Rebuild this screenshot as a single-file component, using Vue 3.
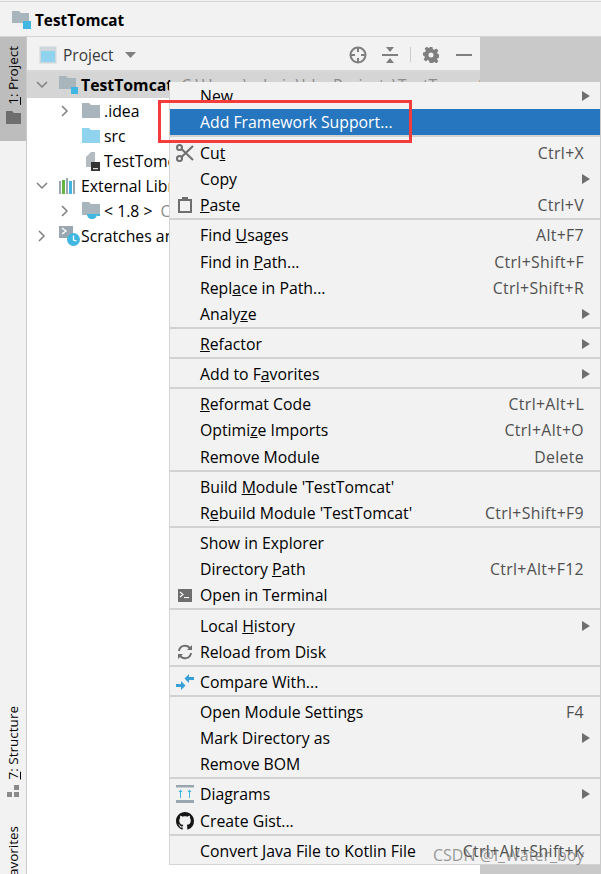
<script setup>
const tree = [
  { id: 'root', indent: 32, arrow: 'down', icon: 'module', label: 'TestTomcat', bold: true, hint: 'C:\\Users\\admin\\IdeaProjects\\TestTomcat', selected: true },
  { id: 'idea', indent: 55, arrow: 'right', icon: 'folder', label: '.idea' },
  { id: 'src', indent: 55, arrow: '', icon: 'src', label: 'src' },
  { id: 'iml', indent: 55, arrow: '', icon: 'iml', label: 'TestTomcat.iml' },
  { id: 'ext', indent: 32, arrow: 'down', icon: 'lib', label: 'External Libraries' },
  { id: 'jdk', indent: 55, arrow: 'right', icon: 'jdk', label: '< 1.8 >', hint: 'C:\\Program Files\\Java' },
  { id: 'scr', indent: 32, arrow: 'right', icon: 'scratch', label: 'Scratches and Consoles' },
]

const groups = [
  [{ t: 'New', sub: 1 }, { t: 'Add Framework Support...', active: 1 }],
  [{ t: 'Cu&t', key: 'Ctrl+X', icon: 'cut' }, { t: 'Copy', sub: 1 }, { t: '&Paste', key: 'Ctrl+V', icon: 'paste' }],
  [{ t: 'Find &Usages', key: 'Alt+F7' }, { t: 'Find in &Path...', key: 'Ctrl+Shift+F' }, { t: 'Repl&ace in Path...', key: 'Ctrl+Shift+R' }, { t: 'Analy&ze', sub: 1 }],
  [{ t: '&Refactor', sub: 1 }],
  [{ t: 'Add to F&avorites', sub: 1 }],
  [{ t: '&Reformat Code', key: 'Ctrl+Alt+L' }, { t: 'Optimi&ze Imports', key: 'Ctrl+Alt+O' }, { t: 'Remove Module', key: 'Delete' }],
  [{ t: 'Build &Module \'TestTomcat\'' }, { t: 'R&ebuild Module \'TestTomcat\'', key: 'Ctrl+Shift+F9' }],
  [{ t: 'Show in Explorer' }, { t: 'Directory &Path', key: 'Ctrl+Alt+F12' }, { t: 'Open in Terminal', icon: 'term' }],
  [{ t: 'Local &History', sub: 1 }, { t: 'Reload from Disk', icon: 'reload' }],
  [{ t: 'Compare With...', icon: 'compare' }],
  [{ t: 'Open Module Settings', key: 'F4' }, { t: 'Mark Directory as', sub: 1 }, { t: 'Remove BOM' }],
  [{ t: 'Diagrams', sub: 1, icon: 'diagram' }, { t: 'Create Gist...', icon: 'github' }],
  [{ t: 'Convert Java File to Kotlin File', key: 'Ctrl+Alt+Shift+K' }],
]

function parts(t) {
  const i = t.indexOf('&')
  if (i < 0) return { a: t, u: '', b: '' }
  return { a: t.slice(0, i), u: t[i + 1], b: t.slice(i + 2) }
}
</script>

<template>
  <div class="app">
    <header class="title">
      <svg class="ic" width="20" height="20" viewBox="0 0 20 20"><path d="M0 1h7l2 2h8v10H0z" fill="#a9b5bd"/><rect x="11" y="11" width="8" height="8" fill="#40b6e0"/></svg>
      <b>TestTomcat</b>
    </header>
    <div class="main">
      <aside class="rail">
        <div class="tab active">
          <span class="vtext"><u>1</u>: Project</span>
          <svg width="15" height="13" viewBox="0 0 15 13"><path d="M0 0h6l2 2h7v11H0z" fill="#6e6e6e"/></svg>
        </div>
        <div class="rail-gap"></div>
        <div class="tab low">
          <span class="vtext"><u>7</u>: Structure</span>
          <svg width="13" height="13" viewBox="0 0 13 13"><g fill="#8a8a8a"><rect x="7" y="0" width="5" height="5"/><rect x="0" y="7" width="5" height="5"/><rect x="7" y="7" width="5" height="5"/></g></svg>
        </div>
        <div class="tab fav"><span class="vtext">2: Favorites</span></div>
      </aside>

      <section class="panel">
        <div class="panel-head">
          <svg width="18" height="18" viewBox="0 0 18 18"><rect x="0.500" y="0.500" width="17" height="17" fill="#cfd6db"/><rect x="2" y="5" width="14" height="11" fill="#8fd3ef"/></svg>
          <span class="panel-name">Project</span>
          <svg width="11" height="6" viewBox="0 0 11 6"><path d="M0 0h11L5.500 6z" fill="#7f7f7f"/></svg>
          <div class="tools">
            <svg width="18" height="18" viewBox="0 0 18 18" fill="none" stroke="#7f7f7f" stroke-width="2"><circle cx="9" cy="9" r="7.500"/><path d="M9 1v5M9 12v5M1 9h5M12 9h5"/></svg>
            <svg class="t2" width="16" height="18" viewBox="0 0 16 18"><g fill="#7f7f7f"><rect x="0" y="8" width="16" height="2"/><path d="M4 1h8L8 6zM4 17h8l-4-5z"/></g></svg>
            <i class="tool-sep"></i>
            <svg width="16" height="16" viewBox="0 0 16 16"><path fill="#7f7f7f" fill-rule="evenodd" d="M6.500 0h3l.4 2.200 1.500.6L13.300 1.500l2.100 2.100-1.300 1.900.6 1.500 2.300.5v3l-2.300.4-.6 1.500 1.300 1.900-2.100 2.100-1.900-1.300-1.500.6L9.500 16h-3l-.4-2.300-1.500-.6-1.900 1.300L.6 12.300l1.300-1.900-.6-1.500L-.000 8.500v-3l2.300-.4.6-1.500L1.600 1.700 3.700-.4l1.900 1.300 1.500-.6zM8 5.500a2.500 2.500 0 1 0 0 5 2.500 2.500 0 0 0 0-5z"/></svg>
            <i class="minus"></i>
          </div>
        </div>
        <div class="tree">
          <div v-for="n in tree" :key="n.id" class="node" :class="{ sel: n.selected }" :style="{ paddingLeft: n.indent + 'px' }">
            <span class="arrow">
              <svg v-if="n.arrow === 'down'" width="12" height="8" viewBox="0 0 12 8" fill="none" stroke="#7f7f7f" stroke-width="1.500"><path d="M1 1l5 5 5-5"/></svg>
              <svg v-else-if="n.arrow === 'right'" width="8" height="12" viewBox="0 0 8 12" fill="none" stroke="#7f7f7f" stroke-width="1.500"><path d="M1 1l5 5-5 5"/></svg>
            </span>
            <span class="node-ic">
              <svg v-if="n.icon === 'module'" width="20" height="20" viewBox="0 0 20 20"><path d="M0 1h7l2 2h8v11H0z" fill="#a9b5bd"/><rect x="12" y="12" width="7" height="7" fill="#40b6e0"/></svg>
              <svg v-else-if="n.icon === 'folder'" width="18" height="15" viewBox="0 0 18 15"><path d="M0 0h7l2 2h9v13H0z" fill="#a9b5bd"/></svg>
              <svg v-else-if="n.icon === 'src'" width="18" height="15" viewBox="0 0 18 15"><path d="M0 0h7l2 2h9v13H0z" fill="#8fd3ef"/></svg>
              <svg v-else-if="n.icon === 'iml'" width="20" height="20" viewBox="0 0 20 20"><path d="M4 6l5-5h4v15H4z" fill="#b5bcc1"/><rect x="9" y="11" width="9" height="9" fill="#333"/><rect x="11" y="17" width="5" height="1.200" fill="#ddd"/></svg>
              <svg v-else-if="n.icon === 'lib'" width="18" height="16" viewBox="0 0 18 16"><rect x="0" y="3" width="2" height="13" fill="#9aa7b0"/><rect x="3" y="2" width="3" height="14" fill="#62b543"/><rect x="7" y="0" width="2" height="16" fill="#9aa7b0"/><rect x="10" y="3" width="3" height="13" fill="#40b6e0"/><rect x="14" y="2" width="2" height="14" fill="#9aa7b0"/></svg>
              <svg v-else-if="n.icon === 'jdk'" width="20" height="18" viewBox="0 0 20 18"><path d="M0 0h7l2 2h9v11H0z" fill="#a9b5bd"/><path d="M5 12h10c0 3-2 5-5 5s-5-2-5-5z" fill="#40b6e0"/><path d="M15 12h3v2h-3z" fill="#40b6e0"/></svg>
              <svg v-else-if="n.icon === 'scratch'" width="22" height="22" viewBox="0 0 22 22"><rect x="0" y="1" width="14" height="12" fill="#9aa7b0"/><path d="M3 3l4 3-4 3" fill="none" stroke="#fff" stroke-width="1.300"/><circle cx="14.500" cy="14.500" r="6.500" fill="#40b6e0"/><path d="M14.500 10.500v4.500l3 1" fill="none" stroke="#fff" stroke-width="1.300"/></svg>
            </span>
            <span class="node-label" :class="{ bold: n.bold }">{{ n.label }}</span>
            <span v-if="n.hint" class="hint">{{ n.hint }}</span>
          </div>
        </div>
      </section>
      <div class="editor"></div>
    </div>

    <nav class="menu">
      <div v-for="(g, gi) in groups" :key="gi" class="group">
        <div v-for="(it, ii) in g" :key="ii" class="item" :class="{ active: it.active }">
          <span class="mic">
            <svg v-if="it.icon === 'cut'" width="18" height="18" viewBox="0 0 18 18" fill="none" stroke="#6e6e6e" stroke-width="2"><circle cx="3.500" cy="3.500" r="2.500"/><circle cx="3.500" cy="14.500" r="2.500"/><path d="M5.500 5L17 16M5.500 13L17 2"/></svg>
            <svg v-else-if="it.icon === 'paste'" width="14" height="16" viewBox="0 0 14 16" fill="none" stroke="#6e6e6e" stroke-width="2"><rect x="1" y="3" width="12" height="12"/><rect x="4" y="0" width="6" height="4" fill="#6e6e6e" stroke="none"/></svg>
            <svg v-else-if="it.icon === 'term'" width="14" height="13" viewBox="0 0 14 13"><rect width="14" height="13" fill="#6e6e6e"/><path d="M2 3l3 2.500-3 2.500" fill="none" stroke="#fff" stroke-width="1.100"/><rect x="6" y="8" width="5" height="1.100" fill="#fff"/></svg>
            <svg v-else-if="it.icon === 'reload'" width="16" height="16" viewBox="0 0 16 16" fill="none" stroke="#6e6e6e" stroke-width="2"><path d="M2 7a6 6 0 0 1 11-2.500M14 9a6 6 0 0 1-11 2.500"/><path d="M15 1v5h-5zM1 15v-5h5z" fill="#6e6e6e" stroke="none"/></svg>
            <svg v-else-if="it.icon === 'compare'" width="18" height="18" viewBox="0 0 18 18"><g fill="#389fd6"><path d="M0 11h5V8l4.500 4.500L5 17v-3H0z"/><path d="M18 4h-5V1L8.500 5.500 13 10V7h5z"/></g></svg>
            <svg v-else-if="it.icon === 'diagram'" width="18" height="18" viewBox="0 0 18 18"><rect width="18" height="2.500" fill="#9aa7b0"/><rect y="15" width="18" height="3" fill="#9aa7b0"/><g fill="#40b6e0"><rect x="4" y="6" width="1" height="7"/><rect x="13" y="6" width="1" height="7"/><path d="M2.500 7l2-2.500 2 2.500zM11.500 7l2-2.500 2 2.500z"/></g></svg>
            <svg v-else-if="it.icon === 'github'" width="18" height="18" viewBox="0 0 16 16"><path fill="#161614" d="M8 0C3.580 0 0 3.580 0 8c0 3.540 2.290 6.530 5.470 7.590.4.070.55-.170.55-.380 0-.190-.010-.820-.010-1.490-2.010.370-2.530-.490-2.690-.940-.090-.230-.480-.940-.820-1.130-.280-.150-.680-.520-.010-.530.630-.010 1.080.580 1.230.820.720 1.210 1.870.870 2.330.660.070-.520.280-.870.510-1.070-1.780-.200-3.640-.890-3.640-3.950 0-.870.310-1.590.820-2.150-.080-.200-.360-1.020.080-2.120 0 0 .670-.210 2.200.820.640-.180 1.320-.270 2-.270s1.360.090 2 .270c1.530-1.040 2.200-.820 2.200-.820.440 1.100.160 1.920.080 2.120.510.560.820 1.270.820 2.150 0 3.070-1.870 3.750-3.650 3.950.290.250.540.730.540 1.480 0 1.070-.010 1.930-.010 2.200 0 .210.150.460.550.380A8.010 8.010 0 0 0 16 8c0-4.420-3.580-8-8-8z"/></svg>
          </span>
          <span class="mlabel">{{ parts(it.t).a }}<u v-if="parts(it.t).u">{{ parts(it.t).u }}</u>{{ parts(it.t).b }}</span>
          <span v-if="it.key" class="mkey">{{ it.key }}</span>
          <svg v-if="it.sub" class="caret" width="8" height="10" viewBox="0 0 8 10"><path d="M0 0l8 5-8 5z" fill="#6e6e6e"/></svg>
        </div>
      </div>
    </nav>

    <div class="callout"></div>
    <div class="mark">CSDN @i_Water_boy</div>
  </div>
</template>

<style scoped>
.app {
  width: 601px;
  height: 874px;
  display: flex;
  flex-direction: column;
  position: relative;
  overflow: hidden;
  background: #f2f2f2;
  font-family: "Open Sans", "Noto Sans", sans-serif;
  font-size: 15.8px;
  color: #000;
}
.title {
  margin-top: 1px;
  border-top: 1px solid #d4d4d4;
  border-bottom: 1px solid #d4d4d4;
  height: 32px;
  padding-top: 2px;
  display: flex;
  align-items: center;
  padding-left: 12px;
  gap: 3px;
  font-size: 15.300px;
}
.main { flex: 1; display: flex; min-height: 0; }
.rail {
  width: 26px;
  border-right: 1px solid #c9c9c9;
  display: flex;
  flex-direction: column;
  background: #f2f2f2;
  flex: none;
}
.tab {
  display: flex;
  flex-direction: column;
  align-items: center;
  gap: 6px;
  font-size: 13.500px;
}
.tab.active { background: #bdbdbd; height: 104px; padding-top: 9px; box-sizing: border-box; }
.rail-gap { flex: 1; }
.tab.low { padding-bottom: 22px; }
.tab.fav { height: 48px; overflow: hidden; justify-content: flex-start; margin-top: 6px; }
.vtext { writing-mode: vertical-rl; transform: rotate(180deg); white-space: nowrap; line-height: 26px; }
.panel { width: 453px; flex: none; background: #fff; display: flex; flex-direction: column; }
.panel-head {
  height: 31px;
  padding-top: 2px;
  background: #f2f2f2;
  border-bottom: 2px solid #d8d8d8;
  display: flex;
  align-items: center;
  padding-left: 12px;
  gap: 6px;
}
.panel-name { color: #3a3a3a; font-size: 15.500px; margin-right: 5px; }
.tools { margin-left: auto; display: flex; align-items: center; padding-right: 8px; }
.t2 { margin-left: 15px; }
.tool-sep { width: 1px; height: 15px; background: #ccc; margin: 0 12px; }
.minus { width: 16px; height: 2px; background: #7f7f7f; margin-left: 17px; }
.tree { display: flex; flex-direction: column; }
.node {
  height: 25px;
  display: flex;
  align-items: center;
  white-space: nowrap;
  overflow: hidden;
  position: relative;
}
.node.sel { background: #d5d5d5; height: 26px; }
.arrow { position: absolute; margin-left: -24px; width: 14px; display: flex; justify-content: center; }
.node-ic { width: 22px; display: flex; align-items: center; flex: none; }
.bold { font-weight: 700; }
.hint { color: #8c8c8c; margin-left: 8px; }
.editor { flex: 1; background: #c9c9c9; }

.menu {
  position: absolute;
  left: 169px;
  top: 82px;
  width: 431px;
  box-sizing: border-box;
  background: #f2f2f2;
  border: 1px solid #d4d4d4;
  border-right: 0;
  border-top: 0;
  padding-top: 1px;
  display: flex;
  flex-direction: column;
}
.group { display: flex; flex-direction: column; border-bottom: 2px solid #d2d2d2; margin-bottom: 2px; }
.group:first-child { margin-bottom: 2.500px; }
.group:last-child { border-bottom: 0; margin-bottom: 0; }
.item {
  height: 26.160px;
  display: flex;
  align-items: center;
  padding-right: 16px;
  white-space: nowrap;
  position: relative;
}
.item.active { background: #2675bf; color: #fff; }
.mic { width: 30px; flex: none; display: flex; justify-content: center; align-items: center; padding-right: 1px; box-sizing: border-box; }
.mlabel { flex: 1; }
.mkey { color: #505050; letter-spacing: 0.350px; }
.caret { position: absolute; right: 10px; }

.callout {
  position: absolute;
  left: 158px;
  top: 100px;
  width: 254px;
  height: 43px;
  box-sizing: border-box;
  border: 3px solid #f53c3c;
}
.mark {
  position: absolute;
  left: 433px;
  top: 844px;
  color: rgba(110, 110, 110, 0.7);
  font-size: 16px;
  white-space: nowrap;
}
</style>
